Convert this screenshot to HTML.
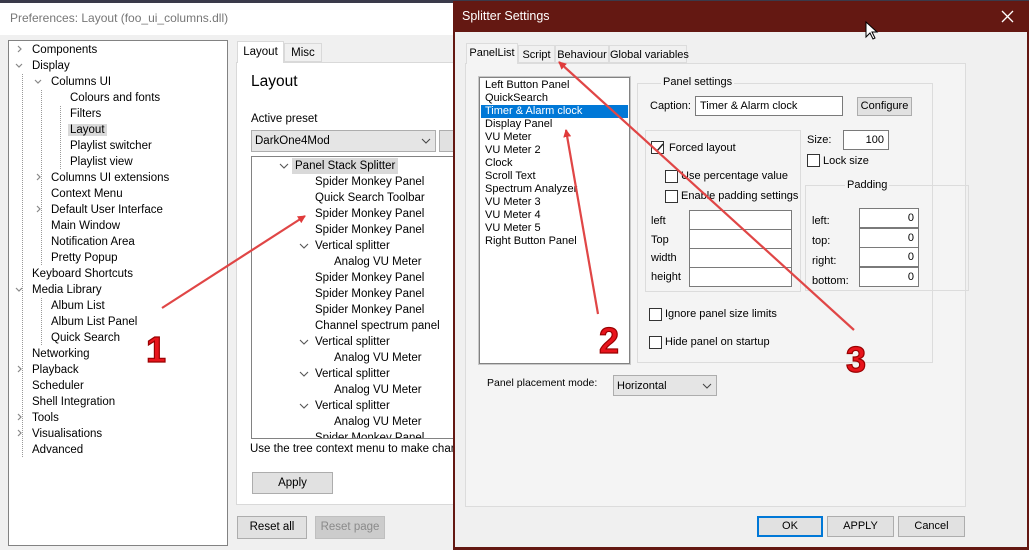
<!DOCTYPE html>
<html><head><meta charset="utf-8"><style>
*{margin:0;padding:0;box-sizing:border-box}
body{width:1029px;height:550px;overflow:hidden;position:relative;background:#f0f0f0;font-family:"Liberation Sans",sans-serif;font-size:11.5px;color:#000}
.a{position:absolute;white-space:nowrap}
.w{background:#fff}
.btn{position:absolute;background:#e1e1e1;border:1px solid #adadad;text-align:center;font-size:11.5px}
.cb{position:absolute;width:13px;height:13px;border:1px solid #333;background:#fff}
.inp{position:absolute;background:#fff;border:1px solid #7a7a7a;text-align:right;padding-right:4px;font-size:11.5px}
.grp{position:absolute;border:1px solid #dcdcdc}
.t{line-height:16px}
.d{font-size:11px}
</style></head><body>
<div class="a" style="left:0;top:0;width:1029px;height:3px;background:#3a3a4a"></div>
<!-- LEFT WINDOW -->
<div class="a" style="left:0;top:3px;width:454px;height:547px;background:#f0f0f0"></div>
<div class="a w" style="left:0;top:3px;width:454px;height:32px"></div>
<div class="a" style="left:10px;top:11px;font-size:12px;color:#777">Preferences: Layout (foo_ui_columns.dll)</div>
<div class="a w" style="left:8px;top:40px;width:220px;height:506px;border:1px solid #828282"></div>
<div class="a t" style="left:32px;top:42px">Components<br>Display</div>
<div class="a t" style="left:51px;top:74px">Columns UI</div>
<div class="a t" style="left:70px;top:90px">Colours and fonts<br>Filters<br><span style="background:#d9d9d9;padding:0 2px;margin-left:-2px">Layout</span><br>Playlist switcher<br>Playlist view</div>
<div class="a t" style="left:51px;top:170px">Columns UI extensions<br>Context Menu<br>Default User Interface<br>Main Window<br>Notification Area<br>Pretty Popup</div>
<div class="a t" style="left:32px;top:266px">Keyboard Shortcuts<br>Media Library</div>
<div class="a t" style="left:51px;top:298px">Album List<br>Album List Panel<br>Quick Search</div>
<div class="a t" style="left:32px;top:346px">Networking<br>Playback<br>Scheduler<br>Shell Integration<br>Tools<br>Visualisations<br>Advanced</div>
<svg class="a" style="left:0;top:0" width="230" height="470">
<g stroke="#999" stroke-dasharray="1 1" fill="none">
<line x1="22.5" y1="74" x2="22.5" y2="458"/><line x1="41.5" y1="90" x2="41.5" y2="266"/><line x1="60.5" y1="106" x2="60.5" y2="170"/><line x1="41.5" y1="298" x2="41.5" y2="346"/>
</g>
<g stroke="#888" fill="none" stroke-width="1.2">
<path d="M18 46l3 3-3 3"/><path d="M16 64l3 3 3-3"/><path d="M35 80l3 3 3-3"/><path d="M37 174l3 3-3 3"/><path d="M37 206l3 3-3 3"/><path d="M16 288l3 3 3-3"/><path d="M18 366l3 3-3 3"/><path d="M18 414l3 3-3 3"/><path d="M18 430l3 3-3 3"/>
</g></svg>
<div class="a" style="left:236px;top:62px;width:218px;height:443px;background:#fff;border:1px solid #d9d9d9"></div>
<div class="a" style="left:237px;top:41px;width:47px;height:22px;background:#fff;border:1px solid #d9d9d9;border-bottom:none;padding-top:4px;text-align:center">Layout</div>
<div class="a" style="left:284px;top:43px;width:38px;height:19px;background:#f0f0f0;border:1px solid #d9d9d9;padding-top:3px;text-align:center">Misc</div>
<div class="a" style="left:251px;top:73px;font-size:15.5px">Layout</div>
<div class="a" style="left:251px;top:113px">Active preset</div>
<div class="a" style="left:251px;top:130px;width:185px;height:22px;background:#e5e5e5;border:1px solid #adadad;padding:4px 3px">DarkOne4Mod</div>
<svg class="a" style="left:421px;top:138px" width="10" height="6"><path d="M1 1l4 4 4-4" stroke="#444" fill="none"/></svg>
<div class="a" style="left:439px;top:130px;width:20px;height:22px;background:#e1e1e1;border:1px solid #adadad"></div>
<div class="a w" style="left:251px;top:156px;width:210px;height:283px;border:1px solid #828282;overflow:hidden"></div>
<svg class="a" style="left:251px;top:156px" width="60" height="260"><g stroke="#555" fill="none" stroke-width="1.1"><path d="M29 8l4 4 4-4"/><path d="M49 88l4 4 4-4"/><path d="M49 184l4 4 4-4"/><path d="M49 216l4 4 4-4"/><path d="M49 248l4 4 4-4"/></g></svg>
<div class="a t" style="left:292px;top:158px;background:#d9d9d9;padding:0 3px">Panel Stack Splitter</div>
<div class="a" style="left:251px;top:158px;width:210px;height:280px;overflow:hidden">
<div class="a t" style="left:64px;top:16px">Spider Monkey Panel<br>Quick Search Toolbar<br>Spider Monkey Panel<br>Spider Monkey Panel<br>Vertical splitter<br><span style="margin-left:19px">Analog VU Meter</span><br>Spider Monkey Panel<br>Spider Monkey Panel<br>Spider Monkey Panel<br>Channel spectrum panel<br>Vertical splitter<br><span style="margin-left:19px">Analog VU Meter</span><br>Vertical splitter<br><span style="margin-left:19px">Analog VU Meter</span><br>Vertical splitter<br><span style="margin-left:19px">Analog VU Meter</span><br>Spider Monkey Panel</div></div>
<div class="a" style="left:250px;top:443px">Use the tree context menu to make changes</div>
<div class="btn" style="left:252px;top:472px;width:81px;height:22px;line-height:20px">Apply</div>
<div class="btn" style="left:237px;top:516px;width:70px;height:23px;line-height:21px">Reset all</div>
<div class="btn" style="left:315px;top:516px;width:70px;height:23px;line-height:21px;color:#8a8a8a;background:#ccc;border-color:#bfbfbf">Reset page</div>
<!-- RIGHT DIALOG -->
<div class="a" style="left:453px;top:1px;width:576px;height:549px;background:#641812"></div>
<div class="a" style="left:455px;top:32px;width:572px;height:515px;background:#f0f0f0"></div>
<div class="a" style="left:462px;top:9px;color:#fff;font-size:12.5px">Splitter Settings</div>
<svg class="a" style="left:1001px;top:10px" width="13" height="13"><path d="M1 1l11 11M12 1L1 12" stroke="#fff" stroke-width="1.3"/></svg>
<svg class="a" style="left:865px;top:21px" width="14" height="20"><path d="M1 1v15l4-4 3 6 2-1-3-6h5z" fill="#fff" stroke="#000" stroke-width="1"/></svg>
<div class="a" style="left:465px;top:63px;width:501px;height:444px;background:#f4f4f4;border:1px solid #dcdcdc"></div>
<div class="a d" style="left:466px;top:43px;width:52px;height:21px;background:#f4f4f4;border:1px solid #dcdcdc;border-bottom:none;padding-top:3px;text-align:center">PanelList</div>
<div class="a d" style="left:518px;top:45px;width:37px;height:18px;border:1px solid #dcdcdc;padding-top:3px;text-align:center">Script</div>
<div class="a d" style="left:555px;top:45px;width:54px;height:18px;border:1px solid #dcdcdc;padding-top:3px;text-align:center">Behaviour</div>
<div class="a d" style="left:609px;top:45px;width:78px;height:18px;border:1px solid #dcdcdc;padding-top:3px;text-align:center">Global variables</div>
<div class="a w" style="left:479px;top:77px;width:151px;height:287px;border:1px solid #828282;outline:1px solid #c8c8c8"></div>
<div class="a" style="left:481px;top:79px;width:147px;line-height:13px;font-size:11px;padding-left:4px">Left Button Panel<br>QuickSearch<br><div style="background:#0078d7;color:#fff;margin-left:-4px;padding-left:4px">Timer &amp; Alarm clock</div>Display Panel<br>VU Meter<br>VU Meter 2<br>Clock<br>Scroll Text<br>Spectrum Analyzer<br>VU Meter 3<br>VU Meter 4<br>VU Meter 5<br>Right Button Panel</div>
<div class="grp" style="left:637px;top:83px;width:296px;height:280px"></div>
<div class="a d" style="left:661px;top:76px;background:#f4f4f4;padding:0 2px">Panel settings</div>
<div class="a d" style="left:650px;top:100px">Caption:</div>
<div class="inp d" style="left:695px;top:96px;width:148px;height:20px;text-align:left;padding:3px 4px">Timer &amp; Alarm clock</div>
<div class="btn d" style="left:857px;top:97px;width:55px;height:19px;line-height:17px">Configure</div>
<div class="grp" style="left:645px;top:130px;width:156px;height:162px"></div>
<div class="cb" style="left:651px;top:141px"></div><svg class="a" style="left:652px;top:142px" width="12" height="12"><path d="M2 6l3 3 6-7" stroke="#222" fill="none" stroke-width="1.4"/></svg>
<div class="a d" style="left:669px;top:142px">Forced layout</div>
<div class="cb" style="left:665px;top:170px"></div><div class="a d" style="left:681px;top:170px">Use percentage value</div>
<div class="cb" style="left:665px;top:190px"></div><div class="a d" style="left:681px;top:190px">Enable padding settings</div>
<div class="a d" style="left:651px;top:212px;line-height:18.5px">left<br>Top<br>width<br>height</div>
<div class="inp" style="left:689px;top:210px;width:103px;height:20px"></div>
<div class="inp" style="left:689px;top:229px;width:103px;height:20px"></div>
<div class="inp" style="left:689px;top:248px;width:103px;height:20px"></div>
<div class="inp" style="left:689px;top:267px;width:103px;height:20px"></div>
<div class="a d" style="left:807px;top:134px">Size:</div>
<div class="inp d" style="left:843px;top:130px;width:46px;height:20px;padding-top:3px">100</div>
<div class="cb" style="left:807px;top:154px"></div><div class="a d" style="left:823px;top:155px">Lock size</div>
<div class="grp" style="left:805px;top:185px;width:164px;height:106px"></div>
<div class="a d" style="left:845px;top:179px;background:#f4f4f4;padding:0 2px">Padding</div>
<div class="a d" style="left:812px;top:211px;line-height:20px">left:<br>top:<br>right:<br>bottom:</div>
<div class="inp d" style="left:859px;top:208px;width:60px;height:20px;padding-top:3px">0</div>
<div class="inp d" style="left:859px;top:228px;width:60px;height:20px;padding-top:3px">0</div>
<div class="inp d" style="left:859px;top:247px;width:60px;height:20px;padding-top:3px">0</div>
<div class="inp d" style="left:859px;top:267px;width:60px;height:20px;padding-top:3px">0</div>
<div class="cb" style="left:649px;top:308px"></div><div class="a d" style="left:665px;top:308px">Ignore panel size limits</div>
<div class="cb" style="left:649px;top:336px"></div><div class="a d" style="left:665px;top:336px">Hide panel on startup</div>
<div class="a d" style="left:487px;top:377px;font-size:10.5px">Panel placement mode:</div>
<div class="a d" style="left:613px;top:375px;width:104px;height:21px;background:#e5e5e5;border:1px solid #adadad;padding:4px 3px">Horizontal</div>
<svg class="a" style="left:702px;top:383px" width="10" height="6"><path d="M1 1l4 4 4-4" stroke="#444" fill="none"/></svg>
<div class="btn d" style="left:757px;top:516px;width:66px;height:21px;line-height:17px;border:2px solid #0078d7">OK</div>
<div class="btn d" style="left:827px;top:516px;width:67px;height:21px;line-height:19px">APPLY</div>
<div class="btn d" style="left:898px;top:516px;width:67px;height:21px;line-height:19px">Cancel</div>
<svg class="a" style="left:0;top:0" width="1029" height="550">
<defs><marker id="h" markerWidth="8" markerHeight="8" refX="7" refY="4" orient="auto" markerUnits="userSpaceOnUse"><path d="M0 0L8 4L0 8z" fill="#e03a3a"/></marker></defs>
<g stroke="#e04646" stroke-width="2.2" fill="none" marker-end="url(#h)">
<line x1="162" y1="308" x2="305" y2="216"/>
<line x1="598" y1="314" x2="566" y2="130"/>
<line x1="854" y1="330" x2="559" y2="62"/>
</g>
<g font-family="Liberation Sans" font-weight="bold" font-size="36" fill="#e8141c" stroke="#900" stroke-width="1.2">
<text x="146" y="362">1</text><text x="599" y="353">2</text><text x="846" y="372">3</text>
</g></svg>
</body></html>
